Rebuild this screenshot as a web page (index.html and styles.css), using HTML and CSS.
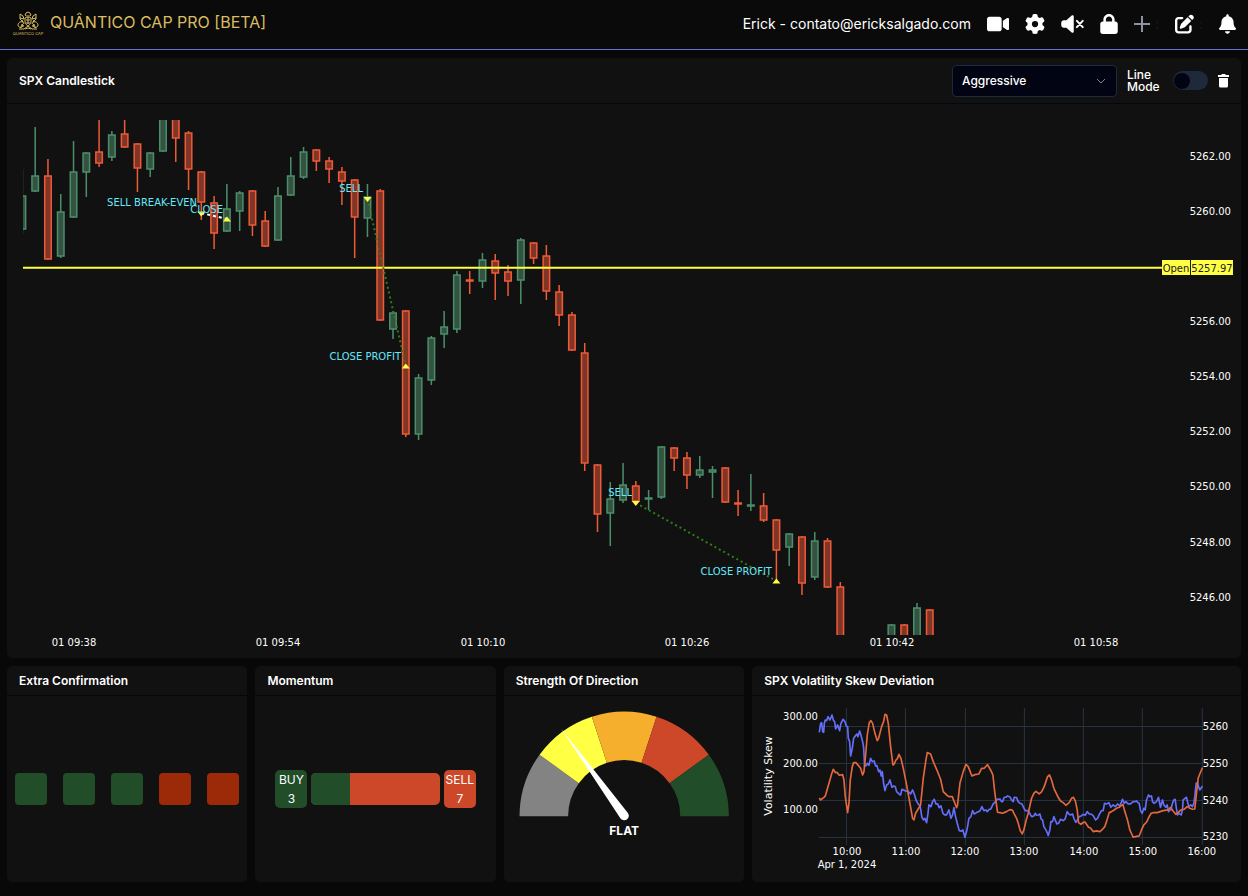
FILE: index.html
```html
<!DOCTYPE html>
<html lang="en">
<head>
<meta charset="utf-8">
<meta name="viewport" content="width=device-width, initial-scale=1">
<title>Quântico Cap Pro</title>
<link rel="stylesheet" href="styles.css">
</head>
<body>
<header class="topbar">
  <a class="brand" href="#">
    <svg class="brand-logo" viewBox="0 0 32 26" aria-hidden="true">
      <g fill="none" stroke="currentColor" stroke-width="1">
        <path d="M13 4l1-2 2-1 2 1 1 2-1.500 1h-3z"/>
        <path d="M8 3l3 2 1 3-4-1M24 3l-3 2-1 3 4-1M8 3v5l3 3M24 3v5l-3 3"/>
        <path d="M13 7c1.500-1 4.500-1 6 0v4c0 2-2 3-3 4-1-1-3-2-3-4zM14 9h4M16 7v6"/>
        <path d="M11 11c-3-1-5 1-5 3s2 3 4 2 1-3-1-2M21 11c3-1 5 1 5 3s-2 3-4 2-1-3 1-2"/>
        <path d="M7 18h5l4-3 4 3h5M8 17l3-4M24 17l-3-4M13 18l3-1 3 1"/>
        <path d="M10 9l2 4M22 9l-2 4M9 15h3M20 15h3M14 12h4"/>
      </g>
      <text class="brand-logo-text" x="16" y="24">QUANTICO CAP</text>
    </svg>
    <span class="brand-name">QUÂNTICO CAP PRO [BETA]</span>
  </a>
  <div class="toolbar">
    <span class="user">Erick - contato@ericksalgado.com</span>
    <button class="icon-btn" type="button" aria-label="Video">
      <svg width="22" height="20" viewBox="0 0 576 512"><path d="M0 128C0 92.700 28.700 64 64 64H320c35.300 0 64 28.700 64 64V384c0 35.300-28.700 64-64 64H64c-35.300 0-64-28.700-64-64V128zM559.100 99.800c10.400 5.600 16.900 16.400 16.900 28.200V384c0 11.800-6.500 22.600-16.900 28.200s-23 5-32.900-1.600l-96-64L416 337.100V320 192 174.900l14.200-9.500 96-64c9.800-6.500 22.400-7.200 32.900-1.600z"/></svg>
    </button>
    <button class="icon-btn" type="button" aria-label="Settings">
      <svg width="20" height="20" viewBox="0 0 512 512"><path d="M495.900 166.600c3.200 8.700 .5 18.400-6.400 24.600l-43.300 39.400c1.100 8.300 1.700 16.800 1.700 25.400s-.6 17.100-1.700 25.400l43.300 39.400c6.900 6.200 9.600 15.900 6.400 24.600c-4.400 11.900-9.700 23.300-15.800 34.300l-4.700 8.100c-6.600 11-14 21.400-22.100 31.200c-5.900 7.200-15.700 9.600-24.500 6.800l-55.700-17.700c-13.400 10.300-28.200 18.900-44 25.400l-12.500 57.100c-2 9.100-9 16.300-18.200 17.800c-13.800 2.300-28 3.500-42.500 3.500s-28.700-1.200-42.500-3.500c-9.200-1.500-16.200-8.700-18.200-17.800l-12.500-57.100c-15.800-6.500-30.600-15.100-44-25.400L83.100 425.900c-8.800 2.800-18.600 .3-24.500-6.800c-8.100-9.800-15.500-20.200-22.100-31.200l-4.700-8.100c-6.100-11-11.400-22.400-15.800-34.300c-3.200-8.700-.5-18.400 6.400-24.600l43.300-39.400C64.600 273.100 64 264.600 64 256s.6-17.100 1.700-25.400L22.400 191.200c-6.900-6.200-9.600-15.900-6.400-24.600c4.400-11.900 9.700-23.300 15.800-34.300l4.700-8.100c6.600-11 14-21.400 22.100-31.200c5.900-7.200 15.700-9.600 24.500-6.800l55.700 17.700c13.400-10.300 28.200-18.900 44-25.400l12.500-57.100c2-9.100 9-16.300 18.200-17.800C227.300 1.200 241.500 0 256 0s28.700 1.200 42.500 3.500c9.200 1.500 16.200 8.700 18.200 17.800l12.500 57.100c15.800 6.500 30.600 15.100 44 25.400l55.700-17.700c8.800-2.800 18.600-.3 24.500 6.800c8.100 9.800 15.500 20.200 22.100 31.200l4.700 8.100c6.100 11 11.400 22.400 15.800 34.300zM256 336a80 80 0 1 0 0-160 80 80 0 1 0 0 160z"/></svg>
    </button>
    <button class="icon-btn" type="button" aria-label="Sound off">
      <svg width="23" height="20" viewBox="0 0 576 512"><path d="M301.100 34.800C312.600 40 320 51.400 320 64V448c0 12.600-7.400 24-18.900 29.200s-25 3.100-34.400-5.300L131.800 352H64c-35.300 0-64-28.700-64-64V224c0-35.300 28.700-64 64-64h67.800L266.700 40.100c9.400-8.400 22.900-10.400 34.400-5.300z"/><path d="M400 176l150 160M550 176L400 336" fill="none" stroke="currentColor" stroke-width="50" stroke-linecap="round"/></svg>
    </button>
    <button class="icon-btn" type="button" aria-label="Lock">
      <svg width="18" height="20" viewBox="0 0 448 512"><path d="M144 144v48H304V144c0-44.200-35.800-80-80-80s-80 35.800-80 80zM80 192V144C80 64.500 144.500 0 224 0s144 64.500 144 144v48h16c35.300 0 64 28.700 64 64V448c0 35.300-28.700 64-64 64H64c-35.300 0-64-28.700-64-64V256c0-35.300 28.700-64 64-64H80z"/></svg>
    </button>
    <div class="tool-pair">
      <button class="icon-btn icon-btn-muted" type="button" aria-label="Add">
        <svg width="16" height="20" viewBox="0 0 16 20"><path d="M8 2v16M0 10h16" fill="none" stroke="currentColor" stroke-width="2"/></svg>
      </button>
      <span class="colon" aria-hidden="true">:</span>
    </div>
    <div class="tool-pair">
      <button class="icon-btn" type="button" aria-label="Edit">
        <svg width="19" height="20" viewBox="0 0 512 512"><path d="M471.600 21.700c-21.900-21.900-57.300-21.900-79.200 0L362.300 51.700l97.900 97.900 30.100-30.100c21.900-21.900 21.900-57.300 0-79.200L471.600 21.700zm-299.200 220c-6.100 6.100-10.800 13.600-13.500 21.900l-29.600 88.800c-2.900 8.600-.6 18.100 5.800 24.600s15.900 8.700 24.600 5.800l88.800-29.600c8.200-2.700 15.700-7.400 21.900-13.500L437.700 172.300 339.700 74.300 172.400 241.700zM96 64C43 64 0 107 0 160V416c0 53 43 96 96 96H352c53 0 96-43 96-96V320c0-17.700-14.300-32-32-32s-32 14.300-32 32v96c0 17.700-14.300 32-32 32H96c-17.700 0-32-14.300-32-32V160c0-17.700 14.300-32 32-32h96c17.700 0 32-14.300 32-32s-14.300-32-32-32H96z"/></svg>
      </button>
      <span class="colon" aria-hidden="true">:</span>
    </div>
    <button class="icon-btn" type="button" aria-label="Notifications">
      <svg width="17" height="20" viewBox="0 0 448 512"><path d="M224 0c-17.700 0-32 14.300-32 32V51.200C119 66 64 130.600 64 208v18.800c0 47-17.300 92.400-48.500 127.600l-7.400 8.300c-8.400 9.400-10.400 22.900-5.300 34.400S19.400 416 32 416H416c12.600 0 24-7.400 29.200-18.900s3.100-25-5.300-34.400l-7.400-8.300C401.300 319.200 384 273.900 384 226.800V208c0-77.400-55-142-128-156.800V32c0-17.700-14.300-32-32-32zm45.300 493.300c12-12 18.700-28.300 18.700-45.300H224 160c0 17 6.700 33.300 18.700 45.300s28.300 18.700 45.300 18.700s33.300-6.700 45.300-18.700z"/></svg>
    </button>
  </div>
</header>

<main class="dashboard">
  <section class="card card-main">
    <div class="card-head card-head-tall">
      <h2 class="card-title">SPX Candlestick</h2>
      <div class="controls">
        <div class="select-wrap">
          <select class="select" aria-label="Profile">
            <option>Aggressive</option>
          </select>
          <svg class="select-arrow" width="10" height="10" viewBox="0 0 10 10" aria-hidden="true"><path d="M1 3l4 4 4-4" fill="none" stroke="currentColor"/></svg>
        </div>
        <label class="mode-label" for="line-mode">Line Mode</label>
        <input class="switch" id="line-mode" type="checkbox" role="switch">
        <button class="icon-btn" type="button" aria-label="Delete">
          <svg width="11" height="14" viewBox="0 0 11 14"><path d="M0 1h3l1-1h3l1 1h3v2H0zM1 4h9v8a1.500 1.500 0 0 1-1.500 1.500h-6A1.500 1.500 0 0 1 1 12z"/></svg>
        </button>
      </div>
    </div>
    <svg class="chart" viewBox="7 104 1234 554" role="img" aria-label="SPX candlestick chart">
      <defs><clipPath id="plot"><rect x="23" y="120" width="1138" height="515"/></clipPath></defs>
      <g id="candles" clip-path="url(#plot)"></g>
      <path class="open-line" d="M23 267.700H1162"/>
      <path class="trade-even" d="M201.300 213L227 219"/>
      <path class="trade-win" d="M367.500 199L405.800 366M635.800 503L776.400 581"/>
      <path class="marker" d="M197.300 211.500h8l-4 5zM363.500 197h8l-4 5zM631.800 501h8l-4 5zM223 221.500h8l-4-5zM401.800 368.500h8l-4-5zM772.400 583.500h8l-4-5z"/>
      <g class="note">
        <text x="197" y="206">SELL BREAK-EVEN</text>
        <text x="223" y="213">CLOSE</text>
        <text x="363" y="192">SELL</text>
        <text x="401" y="360">CLOSE PROFIT</text>
        <text x="632" y="496">SELL</text>
        <text x="772" y="575">CLOSE PROFIT</text>
      </g>
      <g class="axis axis-end">
        <text x="1231" y="160">5262.00</text>
        <text x="1231" y="215">5260.00</text>
        <text x="1231" y="325">5256.00</text>
        <text x="1231" y="380">5254.00</text>
        <text x="1231" y="435">5252.00</text>
        <text x="1231" y="490">5250.00</text>
        <text x="1231" y="546">5248.00</text>
        <text x="1231" y="601">5246.00</text>
      </g>
      <g class="axis axis-mid">
        <text x="74" y="646">01 09:38</text>
        <text x="278" y="646">01 09:54</text>
        <text x="483" y="646">01 10:10</text>
        <text x="687" y="646">01 10:26</text>
        <text x="892" y="646">01 10:42</text>
        <text x="1096" y="646">01 10:58</text>
      </g>
      <path class="tag" d="M1162 260h28v15h-28zM1191 260h42v15h-42z"/>
      <g class="tag-text">
        <text x="1176" y="272">Open</text>
        <text x="1212" y="272">5257.97</text>
      </g>
    </svg>
  </section>

  <section class="card">
    <div class="card-head"><h2 class="card-title">Extra Confirmation</h2></div>
    <div class="card-body signals">
      <span class="signal signal-up"></span>
      <span class="signal signal-up"></span>
      <span class="signal signal-up"></span>
      <span class="signal signal-down"></span>
      <span class="signal signal-down"></span>
    </div>
  </section>

  <section class="card">
    <div class="card-head"><h2 class="card-title">Momentum</h2></div>
    <div class="card-body momentum">
      <div class="side side-buy"><span>BUY</span><span>3</span></div>
      <div class="meter"><div class="meter-buy" style="width:30%"></div></div>
      <div class="side side-sell"><span>SELL</span><span>7</span></div>
    </div>
  </section>

  <section class="card">
    <div class="card-head"><h2 class="card-title">Strength Of Direction</h2></div>
    <svg class="chart" viewBox="504 696 240 186" role="img" aria-label="Strength gauge: flat">
      <g transform="translate(624 816)">
        <path fill="#838383" d="M-104.500 0A104.500 104.500 0 0 1-84.500-61.400L-45.300-32.900A56 56 0 0 0-56 0z"/>
        <path fill="#ffff43" d="M-84.500-61.400A104.500 104.500 0 0 1-32.300-99.400L-17.300-53.300A56 56 0 0 0-45.300-32.900z"/>
        <path fill="#f6ae2d" d="M-32.300-99.400A104.500 104.500 0 0 1 32.300-99.400L17.300-53.300A56 56 0 0 0-17.300-53.300z"/>
        <path fill="#cd4829" d="M32.300-99.400A104.500 104.500 0 0 1 84.500-61.400L45.300-32.900A56 56 0 0 0 17.300-53.300z"/>
        <path fill="#214e29" d="M84.500-61.400A104.500 104.500 0 0 1 104.500 0H56A56 56 0 0 0 45.300-32.900z"/>
        <path fill="#fff" d="M-63-87.500L3.500-3.500a4 4 0 0 1-7 6z"/>
      </g>
      <text class="gauge-text" x="624" y="835">FLAT</text>
    </svg>
  </section>

  <section class="card card-wide">
    <div class="card-head"><h2 class="card-title">SPX Volatility Skew Deviation</h2></div>
    <svg class="chart" viewBox="752 696 489 186" role="img" aria-label="Volatility skew over time">
      <path class="grid" d="M846.500 708v137M905.500 708v137M965.500 708v137M1024.500 708v137M1083.500 708v137M1142.500 708v137M1202.500 708v137M819 726.500h383M819 763.500h383M819 800.500h383M819 837.500h383"/>
      <g transform="translate(750 660) scale(.33333)">
        <polyline class="series series-spx" points="208,217 212,190 215,188 218,215 221,217 223,190 226,180 230,182 234,170 240,180 246,165 250,180 254,185 257,207 263,195 269,212 273,190 279,178 285,185 289,198 293,200 295,235 299,245 302,288 307,265 311,235 318,225 321,222 324,230 329,213 333,225 338,245 341,262 344,318 348,318 352,310 357,316 362,295 367,305 373,303 377,318 381,317 386,335 390,330 394,348 397,335 401,370 405,392 410,375 415,372 420,360 426,382 432,378 436,380 440,395 447,402 452,405 456,388 465,392 475,395 482,402 488,390 494,405 499,422 505,432 511,440 516,472 521,480 525,475 530,488 534,462 537,435 543,440 548,425 553,418 558,432 563,432 568,443 573,438 579,460 584,465 590,465 597,450 603,475 608,465 612,443 617,470 622,490 628,512 634,514 639,510 645,532 650,515 653,500 657,475 663,470 668,452 673,462 680,458 690,453 696,440 702,452 708,450 712,455 718,448 722,448 730,432 737,425 742,418 750,417 755,425 758,425 763,412 768,412 773,408 780,411 785,420 790,425 793,412 800,413 805,425 810,430 816,432 820,440 826,452 832,452 837,455 842,465 846,470 852,468 856,460 860,466 866,465 870,462 874,478 878,480 882,500 888,510 892,518 895,527 900,510 903,485 908,485 912,470 916,480 921,492 926,490 932,478 940,482 945,478 948,470 952,455 957,462 962,465 968,462 972,475 978,487 983,480 988,470 994,468 1000,463 1006,466 1012,455 1018,462 1025,463 1030,467 1037,480 1043,475 1049,462 1055,452 1060,452 1064,430 1070,432 1077,428 1083,442 1090,435 1097,440 1103,432 1110,438 1118,418 1123,430 1128,425 1135,432 1142,432 1150,425 1156,425 1160,423 1164,428 1168,430 1172,452 1177,460 1182,445 1186,450 1190,420 1196,405 1200,410 1205,408 1208,425 1213,430 1220,425 1226,412 1232,442 1238,420 1242,435 1248,442 1252,435 1256,455 1260,450 1263,450 1268,430 1272,420 1276,418 1279,440 1283,465 1288,460 1294,465 1298,450 1300,420 1306,415 1310,412 1313,425 1317,440 1323,435 1328,440 1332,430 1335,410 1339,370 1343,368 1346,380 1350,390 1358,378"/>
        <polyline class="series series-skew" points="208,414 212,420 222,412 226,408 245,342 250,328 256,338 261,337 268,346 278,344 282,360 286,410 293,458 297,430 301,360 307,320 311,308 318,308 332,325 338,345 342,335 347,285 352,225 358,188 363,182 368,190 375,220 382,242 386,235 395,200 401,185 405,163 410,165 415,190 422,260 429,315 433,312 438,300 443,295 447,283 453,295 460,325 470,375 480,430 488,475 492,480 497,460 508,442 512,435 520,355 528,300 532,278 542,282 550,305 560,328 572,358 580,395 590,405 597,410 607,410 615,430 620,443 623,435 630,370 640,335 648,313 655,320 666,348 675,344 687,342 695,325 703,325 713,314 722,330 729,345 735,400 743,457 750,458 758,460 770,455 780,449 787,450 793,462 800,475 805,490 811,512 817,522 822,510 829,480 835,460 845,415 852,400 858,394 868,402 875,396 883,380 893,350 899,345 905,360 912,385 925,412 932,423 940,428 948,436 958,428 965,415 971,412 977,425 982,450 986,488 993,493 1001,487 1005,486 1010,493 1016,502 1022,504 1030,515 1040,513 1050,515 1058,508 1065,500 1070,485 1078,458 1085,455 1093,450 1100,445 1108,442 1119,433 1125,455 1133,480 1140,510 1150,532 1157,530 1168,528 1175,510 1182,495 1190,487 1197,472 1204,460 1212,458 1222,458 1240,452 1255,450 1262,442 1270,453 1278,463 1285,458 1293,450 1303,448 1312,440 1320,445 1328,448 1335,447 1340,400 1345,355 1350,342 1358,323"/>
      </g>
      <text class="axis-title" transform="translate(772 776) rotate(-90)">Volatility Skew</text>
      <g class="axis axis-end">
        <text x="818" y="720">300.00</text>
        <text x="818" y="767">200.00</text>
        <text x="818" y="813">100.00</text>
      </g>
      <g class="axis">
        <text x="1203" y="730">5260</text>
        <text x="1203" y="767">5250</text>
        <text x="1203" y="804">5240</text>
        <text x="1203" y="840">5230</text>
      </g>
      <g class="axis axis-mid">
        <text x="847" y="855">10:00</text>
        <text x="906" y="855">11:00</text>
        <text x="965" y="855">12:00</text>
        <text x="1024" y="855">13:00</text>
        <text x="1084" y="855">14:00</text>
        <text x="1143" y="855">15:00</text>
        <text x="1202" y="855">16:00</text>
        <text x="847" y="868">Apr 1, 2024</text>
      </g>
    </svg>
  </section>
</main>
<script src="chart.js"></script>
</body>
</html>
```
FILE: styles.css
```css
* { box-sizing: border-box; }

body {
  margin: 0;
  background: #080808;
  color: #fff;
  font-family: Inter, "Open Sans", sans-serif;
  font-size: 14px;
}

/* Top bar */
.topbar {
  display: flex;
  align-items: center;
  justify-content: space-between;
  gap: 16px;
  min-height: 50px;
  padding: 0 12px 2px;
  background: #0a0a0a;
  border-bottom: 1px solid #6b70d8;
}
.brand {
  display: flex;
  align-items: center;
  gap: 6px;
  color: #d9bd62;
  text-decoration: none;
}
.brand-logo { width: 32px; height: 26px; }
.brand-logo-text { font-size: 4px; text-anchor: middle; fill: currentColor; }
.brand-name { font-size: 16px; font-weight: 400; line-height: 20px; padding-bottom: 4px; }

.toolbar { display: flex; align-items: center; gap: 16px; }
.tool-pair { display: flex; align-items: center; gap: 5px; }
.user { font-size: 14px; font-weight: 400; }
.colon { width: 4px; color: #1c1c1c; }

.icon-btn {
  display: flex;
  padding: 0;
  border: 0;
  background: none;
  color: #fff;
  cursor: pointer;
}
.icon-btn svg { fill: currentColor; }
.icon-btn-muted { color: #8b93a1; }

/* Card grid */
.dashboard {
  display: grid;
  grid-template-columns: repeat(5, minmax(0, 1fr));
  gap: 8px;
  padding: 8px 7px 14px;
}
.card {
  display: flex;
  flex-direction: column;
  background: #111;
  border-radius: 5px;
}
.card-main { grid-column: 1 / -1; }
.card-wide { grid-column: span 2; }

.card-head {
  display: flex;
  align-items: center;
  justify-content: space-between;
  min-height: 30px;
  padding: 2px 12px 0;
  border-bottom: 1px solid #05050e;
}
.card-head-tall { min-height: 46px; padding-top: 0; }
.card-title { margin: 0; font-size: 12px; font-weight: 600; line-height: 16px; }
.card-body { flex: 1; display: flex; align-items: center; }

/* Chart controls */
.controls { display: flex; align-items: center; gap: 10px; }
.select-wrap { display: grid; align-items: center; width: 165px; }
.select {
  grid-area: 1 / 1;
  appearance: none;
  height: 32px;
  padding: 0 9px;
  border: 1px solid #1e293b;
  border-radius: 4px;
  background: #020413;
  color: #fff;
  font: 500 12px Inter, sans-serif;
}
.select-arrow {
  grid-area: 1 / 1;
  justify-self: end;
  margin-right: 11px;
  color: #7d818a;
  pointer-events: none;
}
.mode-label { width: 36px; font-size: 12px; font-weight: 500; line-height: 12px; }
.switch {
  appearance: none;
  display: flex;
  align-items: center;
  width: 35px;
  height: 19px;
  margin: 0;
  padding: 0 1px;
  border-radius: 10px;
  background: #1e293b;
  cursor: pointer;
}
.switch::before {
  content: "";
  width: 16px;
  height: 16px;
  border-radius: 50%;
  background: #020413;
}
.switch:checked { justify-content: flex-end; }

/* Charts */
.chart {
  display: block;
  width: 100%;
  height: auto;
  font-family: "DejaVu Sans", Verdana, sans-serif;
  font-size: 10px;
}
.axis, .axis-title { fill: #fff; }
.axis-title { font-size: 11px; text-anchor: middle; }
.axis-end, .note { text-anchor: end; }
.axis-mid, .tag-text { text-anchor: middle; }
.note { fill: #67e8f9; }
.up { fill: #34523f; stroke: #4a8f6c; }
.down { fill: #803626; stroke: #f05a38; }
.candle { stroke-width: 1.5; }
.open-line { stroke: #ffff43; stroke-width: 2; }
.marker, .tag { fill: #ffff43; }
.tag-text { fill: #222; }
.trade-even { stroke: #fff; stroke-width: 2; stroke-dasharray: 3 3; }
.trade-win { stroke: #2f7d1b; stroke-width: 2; stroke-dasharray: 2 3; }
.grid { stroke: #283442; }
.series { fill: none; stroke-width: 5; stroke-linejoin: round; }
.series-spx { stroke: #636efa; }
.series-skew { stroke: #e2683f; }
.gauge-text {
  font-family: Inter, sans-serif;
  font-size: 12px;
  font-weight: 700;
  text-anchor: middle;
  fill: #fff;
}

/* Extra confirmation */
.signals { justify-content: space-between; padding: 0 8px; }
.signal { width: 32px; height: 32px; border-radius: 4px; }
.signal-up { background: #214e29; }
.signal-down { background: #9c2a08; }

/* Momentum */
.momentum { gap: 4px; padding: 0 20px; }
.side {
  display: flex;
  flex-direction: column;
  align-items: center;
  width: 32px;
  border-radius: 5px;
  font-size: 12px;
  font-weight: 400;
  line-height: 19px;
}
.side-buy, .meter-buy { background: #214e29; }
.side-sell, .meter { background: #cd4829; }
.meter { flex: 1; height: 32px; border-radius: 5px; overflow: hidden; }
.meter-buy { height: 100%; }
```
FILE: chart.js
```js
// One row per minute from 09:34: slot, high, body top, body bottom, low, direction.
const rows = [
  [0,169,195,230,234,1],[1,127,175,192,192,1],[2,159,175,260,260,0],[3,194,211,257,258,1],
  [4,141,171,218,218,1],[5,152,152,173,197,1],[6,120,151,164,167,0],[7,131,134,158,161,1],
  [8,110,133,148,148,0],[9,143,143,169,192,0],[10,152,152,170,177,1],[11,110,110,152,152,1],
  [12,110,110,139,162,0],[13,131,132,170,190,0],[14,171,171,203,220,0],[15,196,202,234,249,0],
  [16,184,208,232,232,1],[17,191,192,212,231,1],[18,190,190,226,236,0],[19,211,220,247,247,0],
  [20,187,195,241,241,1],[21,157,175,196,196,1],[22,147,151,178,179,1],[23,149,149,162,171,0],
  [24,157,160,170,183,0],[25,167,171,182,205,0],[26,179,179,218,258,0],[27,184,196,219,237,1],
  [28,189,190,321,321,0],[29,311,312,330,339,1],[30,310,310,435,437,0],[31,374,377,435,440,1],
  [32,336,337,381,385,1],[33,311,326,335,348,1],[34,271,274,330,333,1],[35,271,279,282,294,0],
  [36,253,259,282,288,1],[37,254,260,274,300,0],[38,265,271,282,296,0],[39,238,239,281,304,1],
  [40,242,242,259,264,0],[41,245,255,292,300,0],[42,285,291,316,326,0],[43,312,314,351,351,0],
  [44,343,352,464,471,0],[45,464,464,515,532,0],[46,482,498,514,546,1],[47,463,484,501,503,1],
  [48,481,485,502,502,0],[49,490,497,500,510,1],[50,446,446,498,499,1],[51,447,447,459,471,0],
  [52,452,457,476,489,0],[53,456,469,476,478,1],[54,466,469,473,498,1],[55,467,467,503,503,0],
  [56,490,502,505,516,0],[57,474,504,507,511,1],[58,493,505,521,522,0],[59,519,519,551,580,0],
  [60,533,533,548,566,1],[61,536,536,584,595,0],[62,532,540,578,580,1],[63,538,540,588,588,0],
  [64,582,586,650,650,0],[68,624,624,650,650,1],[69,624,624,650,650,0],[70,603,607,650,650,1],
  [71,609,609,650,650,0]
];
const START = 22.4;
const STEP = 12.78;
const HALF = 3.25;
const layer = document.getElementById("candles");
for (const [slot, high, top, bottom, low, up] of rows) {
  const x = START + STEP * slot;
  const path = document.createElementNS("http://www.w3.org/2000/svg", "path");
  path.setAttribute("class", "candle " + (up ? "up" : "down"));
  path.setAttribute("d",
    `M${x} ${high}V${top + 1}M${x} ${bottom - 1}V${low}` +
    `M${x - HALF} ${top + 1}h${HALF * 2}V${bottom - 1}h${-HALF * 2}z`);
  layer.append(path);
}
```
